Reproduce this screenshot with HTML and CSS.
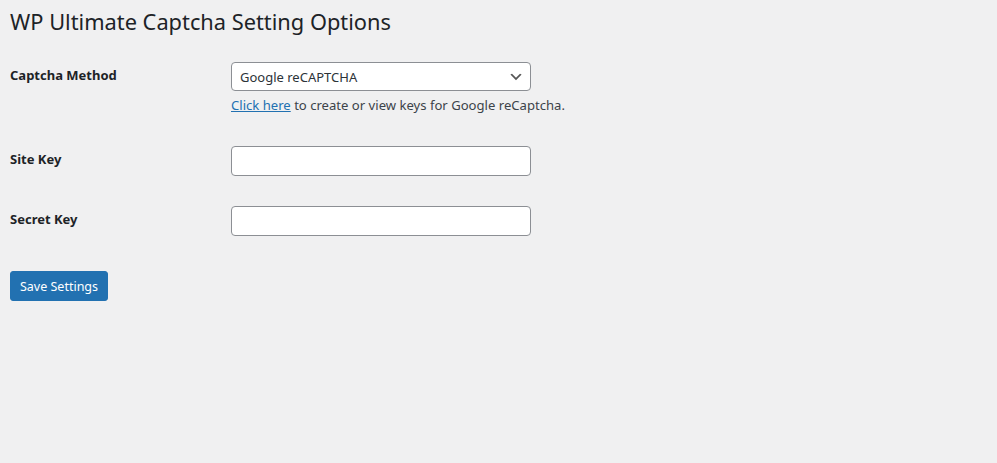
FILE: index.html
```html
<!DOCTYPE html>
<html lang="en">
<head>
<meta charset="utf-8">
<title>WP Ultimate Captcha Setting Options</title>
<link rel="stylesheet" href="styles.css">
</head>
<body>
<div class="wrap">
  <h1 class="page-title">WP Ultimate Captcha Setting Options</h1>
  <form class="settings">
    <div class="row">
      <label class="row-label" for="method">Captcha Method</label>
      <div class="row-field">
        <div class="select-box">
          <span class="select-value">Google reCAPTCHA</span>
          <svg class="chevron" width="16" height="16" viewBox="0 0 20 20"><path d="M5 6l5 5 5-5 2 1-7 7-7-7 2-1z" fill="#555"/></svg>
        </div>
        <p class="description"><a href="#" class="link">Click here</a> to create or view keys for Google reCaptcha.</p>
      </div>
    </div>
    <div class="row">
      <label class="row-label" for="site">Site Key</label>
      <div class="row-field"><input id="site" class="text-input" type="text"></div>
    </div>
    <div class="row">
      <label class="row-label" for="secret">Secret Key</label>
      <div class="row-field"><input id="secret" class="text-input" type="text"></div>
    </div>
    <div class="submit">
      <button type="button" class="button-primary">Save Settings</button>
    </div>
  </form>
</div>
</body>
</html>
```

FILE: styles.css
```css
html, body {
  margin: 0;
  padding: 0;
  background: #f0f0f1;
}
body {
  font-family: "Noto Sans", "Open Sans", sans-serif;
  color: #1d2327;
  font-size: 13px;
}
.wrap {
  padding: 0 10px;
}
.page-title {
  margin: 0;
  padding: 7px 0 0;
  font-size: 21.8px;
  font-weight: 400;
  line-height: 30px;
  color: #1d2327;
}
.settings {
  margin-top: 10px;
}
.row {
  display: flex;
  align-items: flex-start;
}
.row-label {
  width: 221px;
  flex: none;
  padding: 19px 0 21px;
  font-size: 13px;
  font-weight: 700;
  line-height: 18px;
}
.row-field {
  padding: 15px 0;
}
.select-box {
  box-sizing: border-box;
  width: 300px;
  height: 29px;
  border: 1px solid #8c8f94;
  border-radius: 4px;
  background: #fff;
  display: flex;
  align-items: center;
  justify-content: space-between;
  padding: 0 6px 0 8px;
  font-size: 13px;
  color: #2c3338;
}
.chevron {
  flex: none;
}
.description {
  margin: 4px 0 0;
  font-size: 13.1px;
  line-height: 21px;
  color: #3c434a;
}
.link {
  color: #2271b1;
  text-decoration: underline;
}
.text-input {
  box-sizing: border-box;
  display: block;
  width: 300px;
  height: 30px;
  margin: 0;
  border: 1px solid #8c8f94;
  border-radius: 4px;
  background: #fff;
}
.submit {
  padding-top: 20px;
}
.button-primary {
  box-sizing: border-box;
  height: 30px;
  width: 98px;
  padding: 0;
  background: #2271b1;
  border: 1px solid #2271b1;
  border-radius: 3px;
  color: #fff;
  font-family: "Noto Sans", "Open Sans", sans-serif;
  font-size: 12.5px;
}
```
